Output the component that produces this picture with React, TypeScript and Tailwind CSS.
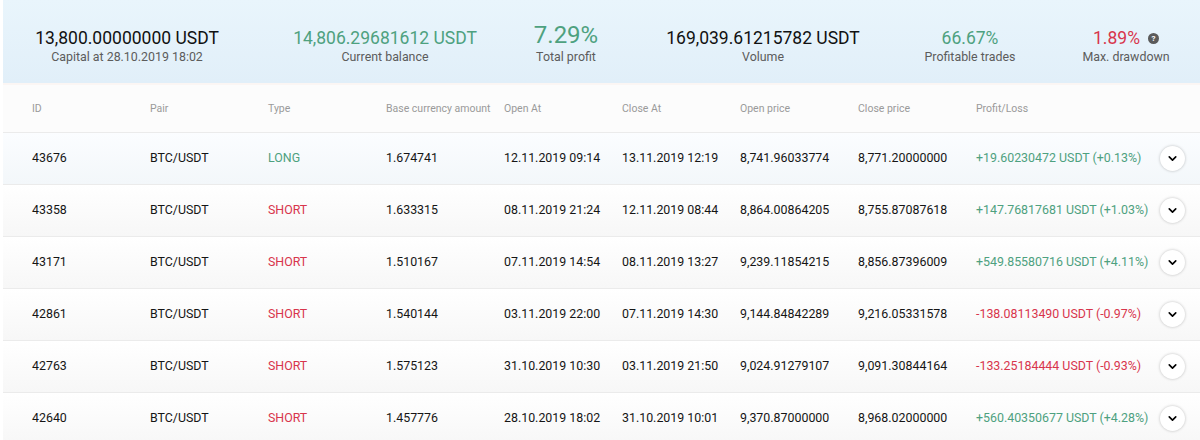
import { ChevronDown } from "lucide-react";

type Trade = {
  id: string;
  type: "LONG" | "SHORT";
  amount: string;
  openAt: string;
  closeAt: string;
  openPrice: string;
  closePrice: string;
  pnl: string;
};

const trades: Trade[] = [
  { id: "43676", type: "LONG", amount: "1.674741", openAt: "12.11.2019 09:14", closeAt: "13.11.2019 12:19", openPrice: "8,741.96033774", closePrice: "8,771.20000000", pnl: "+19.60230472 USDT (+0.13%)" },
  { id: "43358", type: "SHORT", amount: "1.633315", openAt: "08.11.2019 21:24", closeAt: "12.11.2019 08:44", openPrice: "8,864.00864205", closePrice: "8,755.87087618", pnl: "+147.76817681 USDT (+1.03%)" },
  { id: "43171", type: "SHORT", amount: "1.510167", openAt: "07.11.2019 14:54", closeAt: "08.11.2019 13:27", openPrice: "9,239.11854215", closePrice: "8,856.87396009", pnl: "+549.85580716 USDT (+4.11%)" },
  { id: "42861", type: "SHORT", amount: "1.540144", openAt: "03.11.2019 22:00", closeAt: "07.11.2019 14:30", openPrice: "9,144.84842289", closePrice: "9,216.05331578", pnl: "-138.08113490 USDT (-0.97%)" },
  { id: "42763", type: "SHORT", amount: "1.575123", openAt: "31.10.2019 10:30", closeAt: "03.11.2019 21:50", openPrice: "9,024.91279107", closePrice: "9,091.30844164", pnl: "-133.25184444 USDT (-0.93%)" },
  { id: "42640", type: "SHORT", amount: "1.457776", openAt: "28.10.2019 18:02", closeAt: "31.10.2019 10:01", openPrice: "9,370.87000000", closePrice: "8,968.02000000", pnl: "+560.40350677 USDT (+4.28%)" },
];

const columns = ["ID", "Pair", "Type", "Base currency amount", "Open At", "Close At", "Open price", "Close price", "Profit/Loss"];

function Stat({ value, label, width, className, big }: { value: React.ReactNode; label: string; width: string; className?: string; big?: boolean }) {
  return (
    <div className={`flex flex-col items-center text-center ${width} ${className ?? ""}`}>
      <div className={big ? "text-[24px] leading-[28px]" : "text-[17.5px] leading-[22px]"}>{value}</div>
      <div className="text-[12.4px] leading-[16px] text-[#5c5c5c]">{label}</div>
    </div>
  );
}

export default function App() {
  return (
    <div className="w-[1200px] h-[440px] overflow-hidden bg-white pl-[3px]" style={{ fontFamily: "Roboto, 'Liberation Sans', sans-serif" }}>
      <div className="h-[83px] bg-gradient-to-b from-[#e9f5fc] to-[#e1eff9] flex items-end pb-[18px] pl-[14px] text-[#111]">
        <Stat width="w-[220px]" value="13,800.00000000 USDT" label="Capital at 28.10.2019 18:02" />
        <Stat width="w-[220px]" className="ml-[38px]" value={<span className="text-[#4ea17f]">14,806.29681612 USDT</span>} label="Current balance" />
        <Stat width="w-[120px]" className="ml-[11px]" big value={<span className="text-[#4ea17f]">7.29%</span>} label="Total profit" />
        <Stat width="w-[220px]" className="ml-[27px]" value="169,039.61215782 USDT" label="Volume" />
        <Stat width="w-[140px]" className="ml-[27px]" value={<span className="text-[#4ea17f]">66.67%</span>} label="Profitable trades" />
        <Stat
          width="w-[140px]"
          className="ml-[16px]"
          value={
            <span className="flex items-center gap-[8px]">
              <span className="text-[#d8354c]">1.89%</span>
              <span className="w-[11px] h-[11px] rounded-full bg-[#5a5a5a] text-white text-[8px] leading-[11px] font-bold flex items-center justify-center">?</span>
            </span>
          }
          label="Max. drawdown"
        />
      </div>
      <div className="h-[2px] bg-[#fbf6f4]" />
      <div className="h-[48px] bg-[#fcfcfc] flex items-center pl-[29px] pt-[1px] border-b border-[#ebebeb] text-[10.5px] text-[#9a9a9a]">
        {columns.map((c) => (
          <div key={c} className="w-[118px] shrink-0 whitespace-nowrap">{c}</div>
        ))}
      </div>
      {trades.map((t, i) => (
        <div
          key={t.id}
          className={`h-[52px] flex items-center pl-[29px] border-b border-[#ebebeb] text-[12.4px] text-[#151515] bg-gradient-to-b ${i === 0 ? "from-[#fbfdff] to-[#f3f7fa]" : "from-white to-[#f7f7f7]"}`}
        >
          <div className="w-[118px] shrink-0">{t.id}</div>
          <div className="w-[118px] shrink-0">BTC/USDT</div>
          <div className={`w-[118px] shrink-0 ${t.type === "LONG" ? "text-[#4ea17f]" : "text-[#d8354c]"}`}>{t.type}</div>
          <div className="w-[118px] shrink-0">{t.amount}</div>
          <div className="w-[118px] shrink-0">{t.openAt}</div>
          <div className="w-[118px] shrink-0">{t.closeAt}</div>
          <div className="w-[118px] shrink-0">{t.openPrice}</div>
          <div className="w-[118px] shrink-0">{t.closePrice}</div>
          <div className={`w-[184px] shrink-0 whitespace-nowrap ${t.pnl.startsWith("+") ? "text-[#4ea17f]" : "text-[#d8354c]"}`}>{t.pnl}</div>
          <div className="w-[25px] h-[25px] rounded-full bg-white shadow-[0_0_3px_rgba(0,0,0,0.25)] flex items-center justify-center">
            <ChevronDown className="w-[13px] h-[13px] text-black" strokeWidth={3} />
          </div>
        </div>
      ))}
    </div>
  );
}
